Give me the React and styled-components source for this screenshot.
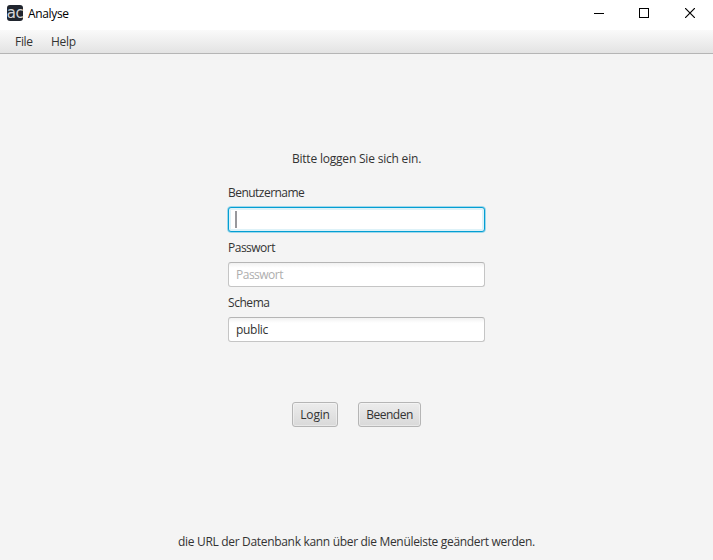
import React from "react";
import styled, { createGlobalStyle } from "styled-components";

const GlobalStyle = createGlobalStyle`
  * { box-sizing: border-box; }
  body { margin: 0; background: #f4f4f4; overflow: hidden; }
`;

const Window = styled.div`
  width: 713px;
  height: 560px;
  display: flex;
  flex-direction: column;
  background: #f4f4f4;
  color: #333;
  font: 12px/16px "Open Sans", "Noto Sans", sans-serif;
  cursor: default;
`;

const Text = styled.span`
  display: block;
  white-space: nowrap;
  letter-spacing: ${(p) => p.$spacing || 0}px;
`;

const TitleBar = styled.header`
  flex: none;
  height: 30px;
  display: flex;
  align-items: flex-start;
  background: #fff;
  color: #000;
  padding-left: 7px;
`;

const AppIcon = styled.div`
  width: 16px;
  height: 16px;
  margin: 5px 5px 0 0;
  border-radius: 3px;
  background: #20252e;
  color: #d3d5d8;
  font: 15px/17px "DejaVu Sans", sans-serif;
  letter-spacing: -0.4px;
  display: flex;
  justify-content: center;
`;

const Title = styled(Text)`
  margin-top: 6px;
`;

const WindowControls = styled.div`
  display: flex;
  margin-left: auto;
`;

const ControlButton = styled.button`
  width: 45px;
  height: 26px;
  margin-right: ${(p) => p.$gap || 0}px;
  padding: 0;
  border: 0;
  background: transparent;
  display: flex;
  align-items: center;
  justify-content: center;
`;

const MenuBar = styled.nav`
  flex: none;
  height: 24px;
  display: flex;
  gap: 18px;
  padding: 4px 15px 0;
  border-bottom: 1px solid #b5b5b5;
  background: linear-gradient(#fafafa, #e3e3e3);
`;

const MenuItem = styled(Text)`
  width: 18px;
`;

const Content = styled.main`
  flex: 1;
  display: flex;
  flex-direction: column;
  align-items: center;
  padding-top: 97px;
`;

const Form = styled.div`
  width: 257px;
  margin-top: 18px;
  display: flex;
  flex-direction: column;
  gap: 8px;
`;

const Field = styled.label`
  display: flex;
  flex-direction: column;
  gap: 6px;
`;

const Input = styled.div`
  height: 25px;
  display: flex;
  align-items: center;
  padding: 0 ${(p) => (p.$focused ? 6 : 7)}px;
  border: 1px solid ${(p) => (p.$focused ? "#039ed3" : "#c5c5c5")};
  border-top-color: ${(p) => (p.$focused ? "#039ed3" : "#b5b5b5")};
  border-radius: 3px;
  background: ${(p) => (p.$focused ? "#fff" : "linear-gradient(#f1f1f1, #fff 5px)")};
  color: ${(p) => (p.$placeholder ? "#aeaeae" : "#323232")};
  box-shadow: ${(p) =>
    p.$focused
      ? "0 0 0 0.5px #7dcbe6, 0 0 0 1px #c3e5f1, inset 0 0 0 2px #def2f8"
      : "none"};
`;

const Caret = styled.span`
  width: 2px;
  height: 17px;
  background: #98989c;
`;

const Actions = styled.div`
  display: flex;
  gap: 20px;
  margin-top: 60px;
`;

const Button = styled.button`
  width: ${(p) => p.$width}px;
  height: 25px;
  display: flex;
  align-items: center;
  justify-content: center;
  padding: 0;
  border: 1px solid #b5b5b5;
  border-radius: 3px;
  background: linear-gradient(#ececec, #d9d9d9);
  box-shadow: inset 0 0 0 1px #ffffff66;
  color: #333;
  font: inherit;
`;

const Footer = styled(Text)`
  margin-top: 107px;
`;

export default function App() {
  return (
    <>
      <GlobalStyle />
      <Window>
        <TitleBar>
          <AppIcon>ac</AppIcon>
          <Title $spacing={-0.35}>Analyse</Title>
          <WindowControls>
            <ControlButton $gap={1} aria-label="Minimize">
              <svg width="10" height="11" shapeRendering="crispEdges">
                <path d="M0 5.5H10" stroke="#000" />
              </svg>
            </ControlButton>
            <ControlButton aria-label="Maximize">
              <svg width="11" height="10" shapeRendering="crispEdges">
                <path d="M.5 .5H9.5V9.5H.5Z" fill="none" stroke="#000" />
              </svg>
            </ControlButton>
            <ControlButton $gap={1} aria-label="Close">
              <svg width="10" height="10">
                <path d="M0 0L10 10M10 0L0 10" stroke="#000" strokeWidth="1.2" />
              </svg>
            </ControlButton>
          </WindowControls>
        </TitleBar>
        <MenuBar>
          <MenuItem $spacing={-0.3}>File</MenuItem>
          <MenuItem $spacing={-0.3}>Help</MenuItem>
        </MenuBar>
        <Content>
          <Text $spacing={-0.2}>Bitte loggen Sie sich ein.</Text>
          <Form>
            <Field>
              <Text $spacing={-0.53}>Benutzername</Text>
              <Input $focused>
                <Caret />
              </Input>
            </Field>
            <Field>
              <Text $spacing={-0.5}>Passwort</Text>
              <Input $placeholder>
                <Text $spacing={-0.5}>Passwort</Text>
              </Input>
            </Field>
            <Field>
              <Text $spacing={-0.45}>Schema</Text>
              <Input>
                <Text $spacing={-0.3}>public</Text>
              </Input>
            </Field>
          </Form>
          <Actions>
            <Button $width={46}>
              <Text $spacing={-0.2}>Login</Text>
            </Button>
            <Button $width={63}>
              <Text $spacing={-0.5}>Beenden</Text>
            </Button>
          </Actions>
          <Footer $spacing={-0.32}>
            die URL der Datenbank kann über die Menüleiste geändert werden.
          </Footer>
        </Content>
      </Window>
    </>
  );
}
